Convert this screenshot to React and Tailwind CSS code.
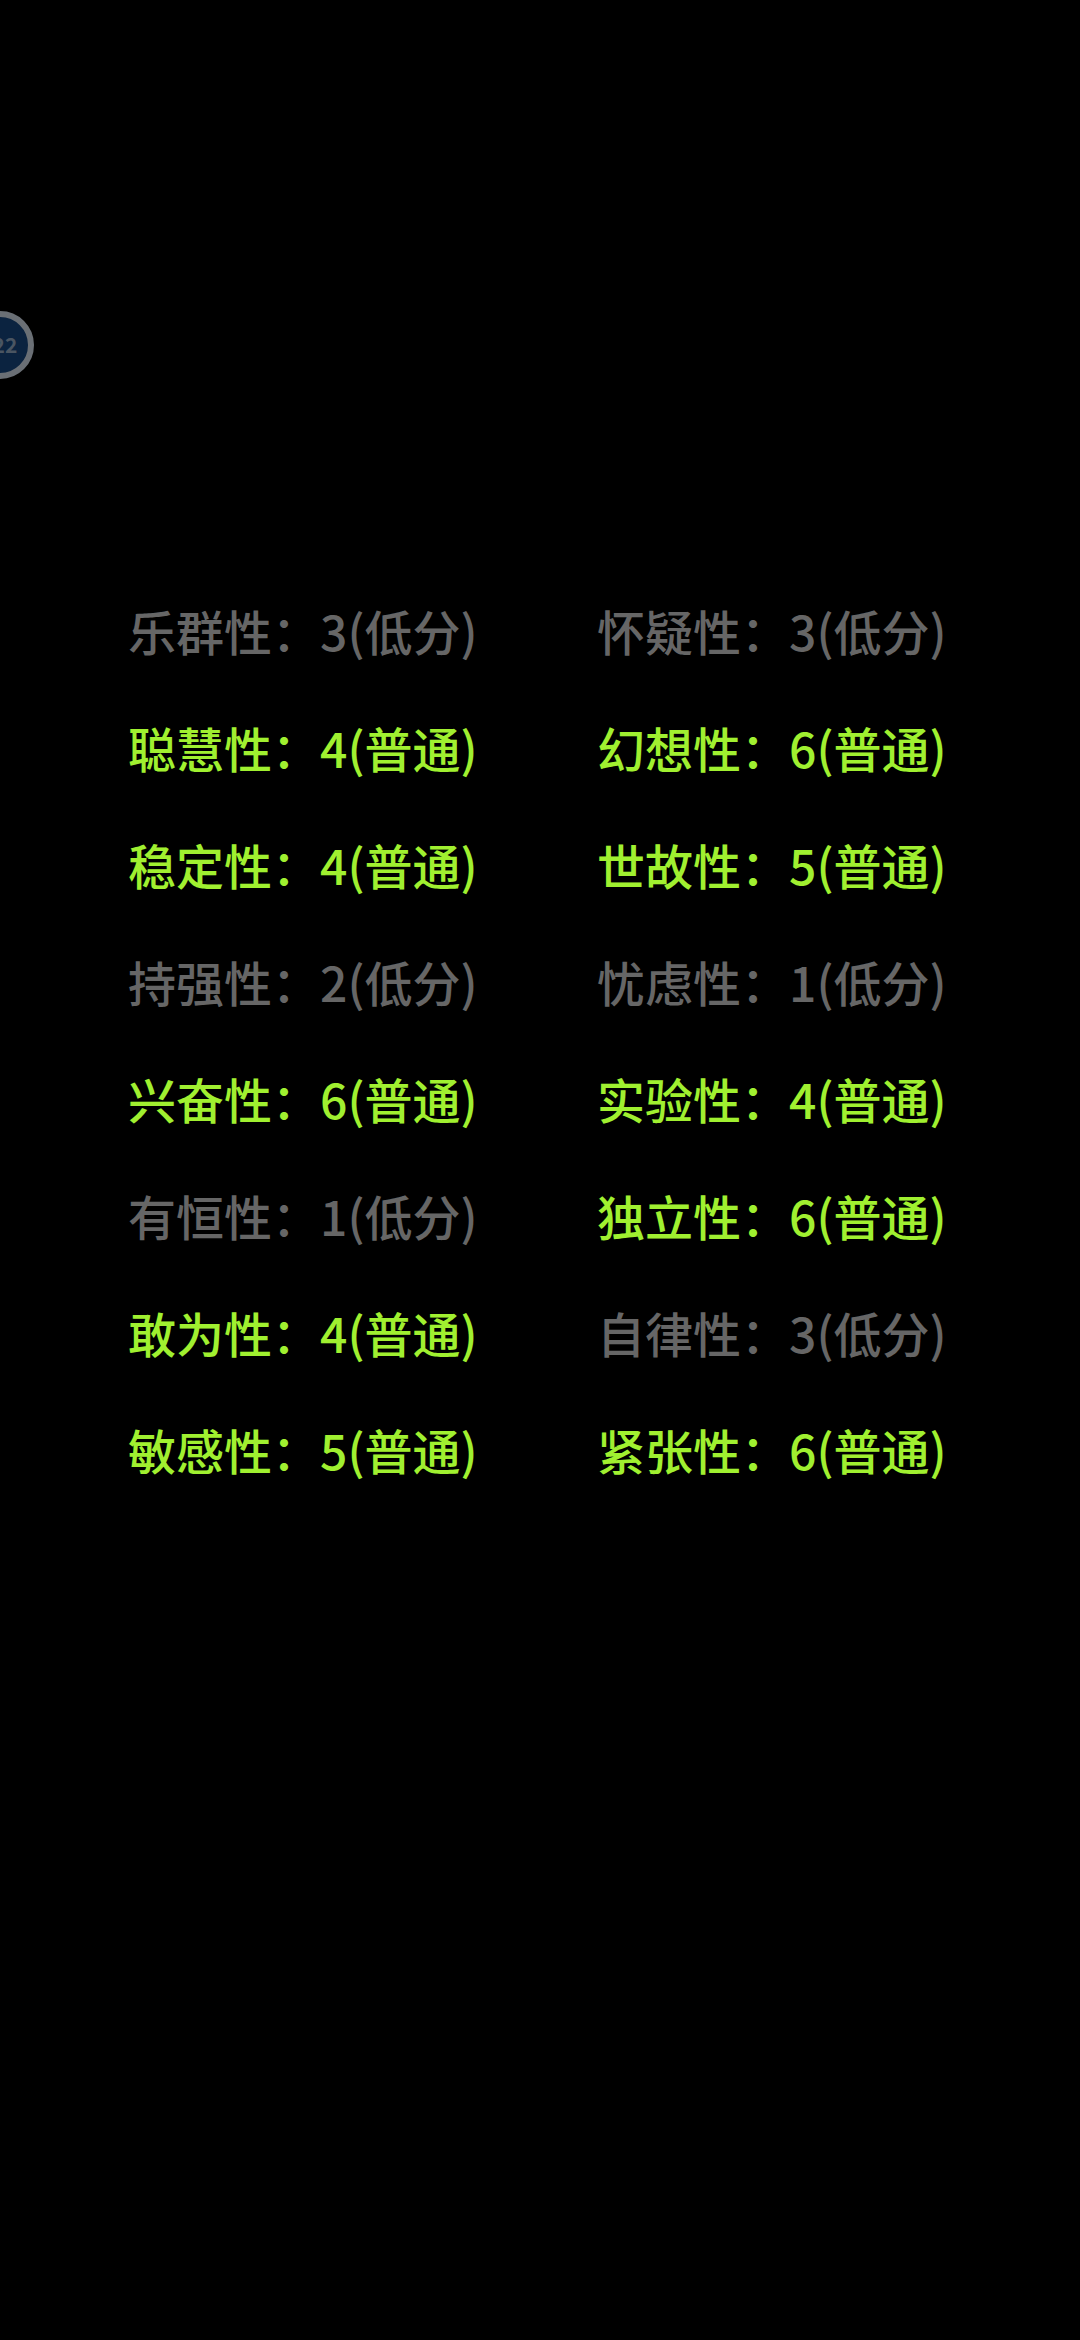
const rows = [
  [["乐群性", "3(低分)", false], ["怀疑性", "3(低分)", false]],
  [["聪慧性", "4(普通)", true], ["幻想性", "6(普通)", true]],
  [["稳定性", "4(普通)", true], ["世故性", "5(普通)", true]],
  [["持强性", "2(低分)", false], ["忧虑性", "1(低分)", false]],
  [["兴奋性", "6(普通)", true], ["实验性", "4(普通)", true]],
  [["有恒性", "1(低分)", false], ["独立性", "6(普通)", true]],
  [["敢为性", "4(普通)", true], ["自律性", "3(低分)", false]],
  [["敏感性", "5(普通)", true], ["紧张性", "6(普通)", true]],
];

function Cell({ name, value, on }) {
  return (
    <div className={`w-[469px] h-[117px] flex items-center text-[48px] font-medium whitespace-nowrap ${on ? "text-[#a0f030]" : "text-[#666666]"}`}>
      {name}：{value}
    </div>
  );
}

export default function App() {
  return (
    <div className="relative w-[1080px] h-[2340px] overflow-hidden bg-black font-['Noto_Sans_CJK_SC','Noto_Sans',sans-serif]">
      <div className="absolute left-[-34px] top-[311px] w-[68px] h-[68px] rounded-full border-[6px] border-[#6a6f75] bg-[#0b2340] flex items-center justify-center">
        <span className="text-[21px] font-bold text-[#4a5562] ml-[10px]">22</span>
      </div>
      <div className="pt-[571px] pl-[128px] flex flex-col">
        {rows.map((row, i) => (
          <div key={i} className="flex">
            {row.map((c) => (
              <Cell key={c[0]} name={c[0]} value={c[1]} on={c[2]} />
            ))}
          </div>
        ))}
      </div>
    </div>
  );
}
